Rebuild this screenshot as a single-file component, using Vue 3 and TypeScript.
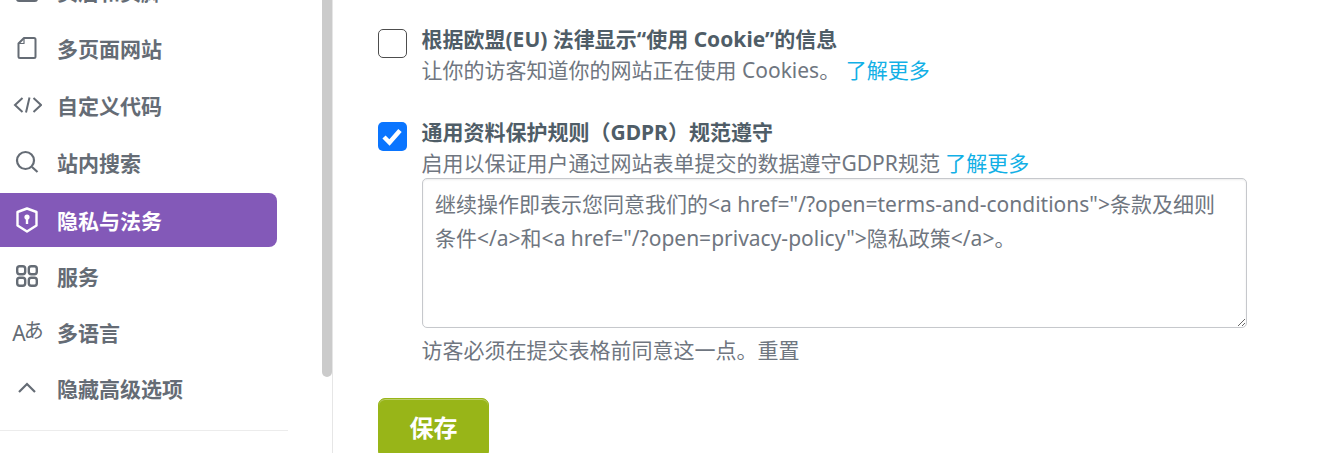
<template>
  <div class="page">
    <aside class="sidebar">
      <nav class="menu">
        <a v-for="item in menu" :key="item.label" class="menu-item" :class="{ active: item.active }">
          <span class="menu-icon">
            <svg v-if="item.icon === 'layout'" width="22" height="22" viewBox="0 0 22 22" fill="none" stroke="currentColor" stroke-width="2"><rect x="1" y="1" width="20" height="20" rx="2" /><path d="M1 7h20M1 15h20" /></svg>
            <svg v-else-if="item.icon === 'page'" width="20" height="22" viewBox="0 0 20 22" fill="none" stroke="currentColor" stroke-width="2" stroke-linejoin="round"><path d="M7 1h10a1.500 1.500 0 0 1 1.500 1.500v17A1.500 1.500 0 0 1 17 21H3a1.500 1.500 0 0 1-1.500-1.500V6.500z" /><path d="M7 1v5.500H1.500" stroke-width="1.200" /></svg>
            <svg v-else-if="item.icon === 'code'" width="30" height="20" viewBox="0 0 30 20" fill="none" stroke="currentColor" stroke-width="2"><path d="M10.500 3 3 10l7.500 7M21.500 3l7.500 7-7.500 7M17.500 2.500l-3.500 15" /></svg>
            <svg v-else-if="item.icon === 'search'" width="24" height="24" viewBox="0 0 24 24" fill="none" stroke="currentColor" stroke-width="2.200"><circle cx="10.500" cy="10.500" r="8.500" /><path d="m17 17 5.500 5" /></svg>
            <svg v-else-if="item.icon === 'shield'" width="22" height="26" viewBox="0 0 22 26" fill="none" stroke="currentColor" stroke-width="2.400" stroke-linejoin="round"><path d="M11 1.500 20.500 5v13.500L11 24.500 1.500 18.500V5z" /><circle cx="11" cy="10" r="2.600" fill="currentColor" stroke="none" /><path d="M11 11v6" /></svg>
            <svg v-else-if="item.icon === 'grid'" width="22" height="22" viewBox="0 0 22 22" fill="none" stroke="currentColor" stroke-width="2.400"><rect x="1.200" y="1.200" width="8" height="8" rx="2.500" /><rect x="12.800" y="1.200" width="8" height="8" rx="2.500" /><rect x="1.200" y="12.800" width="8" height="8" rx="2.500" /><rect x="12.800" y="12.800" width="8" height="8" rx="2.500" /></svg>
            <span v-else-if="item.icon === 'lang'" class="lang-icon"><span class="lang-a">A</span><span class="lang-kana">あ</span></span>
            <svg v-else width="20" height="12" viewBox="0 0 20 12" fill="none" stroke="currentColor" stroke-width="2.200"><path d="m2 10 8-8 8 8" /></svg>
          </span>
          <span>{{ item.label }}</span>
        </a>
      </nav>
      <div class="side-divider"></div>
      <div class="scrollbar"></div>
    </aside>

    <main class="content">
      <div class="option first">
        <span class="check"></span>
        <div class="option-text">
          <div class="option-title">根据欧盟(EU) 法律显示“使用 Cookie”的信息</div>
          <div class="option-desc">让你的访客知道你的网站正在使用 Cookies。 <a class="link">了解更多</a></div>
        </div>
      </div>

      <div class="option second">
        <span class="check checked">
          <svg width="29" height="29" viewBox="0 0 29 29" fill="none" stroke="#fff" stroke-width="4.500"><path d="m6 15 5.500 5.500L22 8.500" /></svg>
        </span>
        <div class="option-text">
          <div class="option-title">通用资料保护规则（GDPR）规范遵守</div>
          <div class="option-desc">启用以保证用户通过网站表单提交的数据遵守GDPR规范 <a class="link">了解更多</a></div>
          <textarea class="consent" readonly :value="consentText"></textarea>
          <div class="option-desc hint">访客必须在提交表格前同意这一点。重置</div>
        </div>
      </div>

      <button class="save" type="button">保存</button>
    </main>
  </div>
</template>

<script setup lang="ts">
interface MenuItem {
  label: string
  icon: string
  active?: boolean
}

const menu: MenuItem[] = [
  { label: '页眉和页脚', icon: 'layout' },
  { label: '多页面网站', icon: 'page' },
  { label: '自定义代码', icon: 'code' },
  { label: '站内搜索', icon: 'search' },
  { label: '隐私与法务', icon: 'shield', active: true },
  { label: '服务', icon: 'grid' },
  { label: '多语言', icon: 'lang' },
  { label: '隐藏高级选项', icon: 'chevron' }
]

const consentText =
  '继续操作即表示您同意我们的<a href="/?open=terms-and-conditions">条款及细则条件</a>和<a href="/?open=privacy-policy">隐私政策</a>。'
</script>

<style>
html,
body {
  margin: 0;
  background: #fff;
  overflow: hidden;
}
</style>

<style scoped>
.page {
  display: flex;
  width: 1323px;
  height: 453px;
  overflow: hidden;
  font-family: "Noto Sans", "Noto Sans CJK SC", sans-serif;
  background: #fff;
}

.sidebar {
  position: relative;
  flex: 0 0 333px;
  box-sizing: border-box;
  height: 453px;
  border-right: 1px solid #e6e6e6;
  overflow: hidden;
}

.menu {
  display: flex;
  flex-direction: column;
  width: 277px;
  margin-top: -38px;
}

.menu-item {
  display: flex;
  align-items: center;
  height: 57px;
  flex: none;
  box-sizing: border-box;
  padding-left: 12px;
  font-size: 21px;
  font-weight: 700;
  color: #656c75;
  border-radius: 0 8px 8px 0;
}

.menu-item.active {
  color: #fff;
  background: #8359b8;
  height: 54px;
  margin: 3px 0 1px;
}

.active ~ .menu-item {
  height: 56px;
}

.menu-icon {
  flex: 0 0 30px;
  width: 30px;
  margin-right: 15px;
  display: flex;
  justify-content: center;
  align-items: center;
  font-weight: 400;
}

.lang-icon {
  display: flex;
  align-items: flex-end;
  margin-left: 2px;
  white-space: nowrap;
  line-height: 24px;
}

.lang-a {
  font-size: 21px;
  margin-right: -2px;
}

.lang-kana {
  font-size: 20px;
  margin-bottom: 2px;
}

.side-divider {
  width: 288px;
  height: 1px;
  margin-top: 14px;
  background: #ececec;
}

.scrollbar {
  position: absolute;
  top: 0;
  right: 0;
  width: 10px;
  height: 377px;
  background: #cbcbcb;
  border-radius: 0 0 5px 5px;
}

.content {
  flex: 1;
  padding: 24px 0 0 45px;
  min-width: 0;
}

.option {
  display: flex;
  gap: 14.500px;
}

.second {
  margin-top: 32px;
}

.check {
  flex: 0 0 29px;
  box-sizing: border-box;
  width: 29px;
  height: 29px;
  margin-top: 5px;
  border: 1.500px solid #4d4d4d;
  border-radius: 5px;
  background: #fff;
}

.check.checked {
  display: flex;
  align-items: center;
  justify-content: center;
  border: none;
  background: #0a75ff;
}

.option-text {
  min-width: 0;
}

.option-title {
  font-size: 21px;
  font-weight: 700;
  line-height: 31px;
  color: #4f5d67;
}

.option-desc {
  margin-top: 1px;
  font-size: 21px;
  line-height: 29px;
  color: #6f7680;
}

.link {
  color: #12b0e6;
}

.consent {
  display: block;
  box-sizing: border-box;
  width: 825px;
  height: 150px;
  margin-left: 0.500px;
  padding: 8px 12px;
  border: 1px solid #c6c8cc;
  border-radius: 5px;
  box-shadow: inset 0 1px 2px rgba(0, 0, 0, 0.08);
  font-family: inherit;
  font-size: 21px;
  line-height: 34px;
  color: #6f7680;
  outline: none;
}

.hint {
  margin-top: 8px;
}

.save {
  display: block;
  width: 111px;
  height: 60px;
  margin-top: 33px;
  padding: 0 0 4px;
  border: 1px solid #98b518;
  border-radius: 7px;
  background: #98b518;
  box-shadow: inset 0 1px 0 rgba(255, 255, 255, 0.35);
  font-family: inherit;
  font-size: 24px;
  font-weight: 700;
  color: #fff;
}
</style>
